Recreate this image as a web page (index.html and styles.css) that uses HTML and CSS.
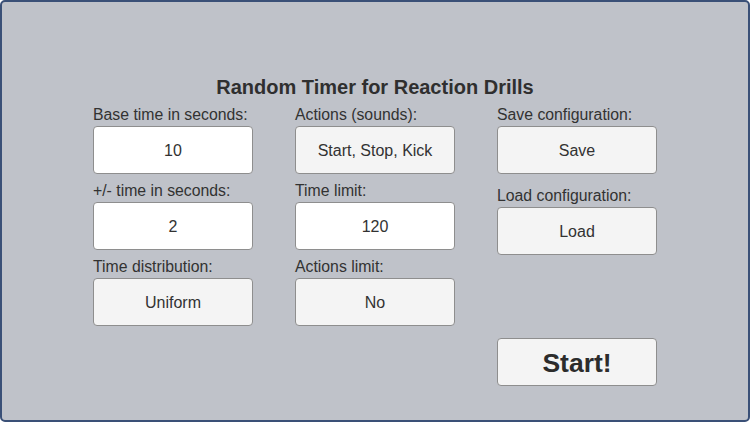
FILE: index.html
```html
<!DOCTYPE html>
<html>
<head>
<meta charset="utf-8">
<link rel="stylesheet" href="styles.css">
</head>
<body>
<div class="frame">
  <h1 class="title">Random Timer for Reaction Drills</h1>
  <div class="grid">
    <div class="col">
      <div class="label">Base time in seconds:</div>
      <div class="box input">10</div>
      <div class="label">+/- time in seconds:</div>
      <div class="box input">2</div>
      <div class="label">Time distribution:</div>
      <div class="box">Uniform</div>
    </div>
    <div class="col">
      <div class="label">Actions (sounds):</div>
      <div class="box">Start, Stop, Kick</div>
      <div class="label">Time limit:</div>
      <div class="box input">120</div>
      <div class="label">Actions limit:</div>
      <div class="box">No</div>
    </div>
    <div class="col">
      <div class="label">Save configuration:</div>
      <div class="box">Save</div>
      <div class="label label-load">Load configuration:</div>
      <div class="box">Load</div>
      <div class="box start">Start!</div>
    </div>
  </div>
</div>
</body>
</html>
```
FILE: styles.css
```css
html, body {
  margin: 0;
  padding: 0;
}
body {
  width: 750px;
  height: 422px;
  font-family: "Liberation Sans", Arial, sans-serif;
  color: #323232;
}
.frame {
  box-sizing: border-box;
  width: 750px;
  height: 422px;
  border: 2px solid #3a5077;
  border-radius: 5px;
  background: #bfc2c9;
  padding-top: 73px;
}
.title {
  margin: 0;
  font-size: 20px;
  line-height: 24px;
  font-weight: bold;
  text-align: center;
  color: #2f2f2f;
}
.grid {
  display: grid;
  grid-template-columns: 160px 160px 160px;
  column-gap: 42px;
  justify-content: center;
  margin-top: 3px;
}
.col {
  display: flex;
  flex-direction: column;
}
.label {
  font-size: 15.8px;
  line-height: 24px;
  height: 24px;
  padding-top: 1px;
  box-sizing: border-box;
  white-space: nowrap;
}
.label-load {
  margin-top: 5px;
}
.box {
  box-sizing: border-box;
  height: 48px;
  border: 1px solid #8e8e8e;
  border-radius: 4px;
  background: #f4f4f4;
  display: flex;
  align-items: center;
  justify-content: center;
  padding-top: 2px;
  font-size: 16px;
  margin-bottom: 4px;
}
.box.input {
  background: #ffffff;
}
.start {
  margin-top: 79px;
  font-size: 26.5px;
  font-weight: bold;
  color: #2c2c2c;
}
```
